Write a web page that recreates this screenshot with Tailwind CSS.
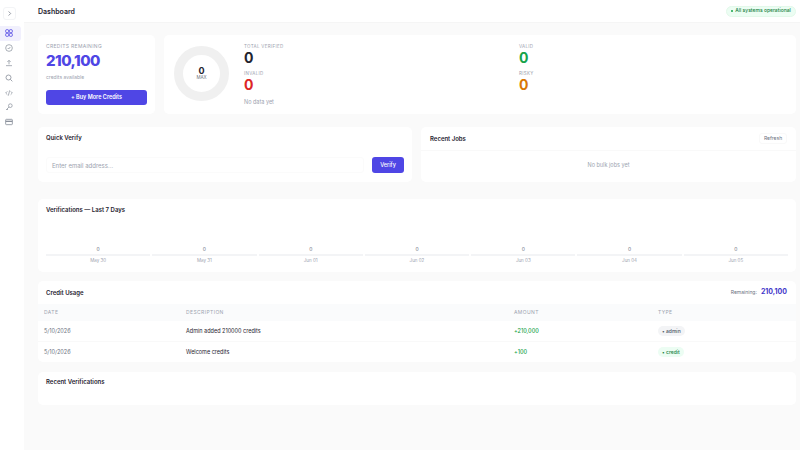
<!DOCTYPE html>
<html lang="en">
<head>
<meta charset="UTF-8">
<title>Dashboard</title>
<script src="https://cdn.jsdelivr.net/npm/@tailwindcss/browser@4"></script>
</head>
<body class="bg-[#fafafa] font-['Inter',sans-serif] text-[#1f2430]">
<div class="flex h-[450px] w-[800px] overflow-hidden">
  <!-- Sidebar -->
  <aside class="w-[24px] shrink-0 bg-white flex flex-col items-start">
    <button class="mt-[7px] ml-[3px] w-[13px] h-[13px] rounded-[3px] border border-[#f3f4f6] flex items-center justify-center text-[#6b7280]">
      <svg width="7" height="7" viewBox="0 0 24 24" fill="none" stroke="currentColor" stroke-width="2.5"><path d="M9 5l7 7-7 7"/></svg>
    </button>
    <nav class="mt-[6px] w-full flex flex-col text-[#8b919c]">
      <a class="h-[14.8px] w-[21px] rounded-r-[3px] bg-[#f1f0fd] text-[#4f46e5] flex items-center pl-[5px]">
        <svg width="8" height="8" viewBox="0 0 24 24" fill="none" stroke="currentColor" stroke-width="2.5"><rect x="2" y="2" width="9" height="9" rx="3"/><rect x="13" y="2" width="9" height="9" rx="3"/><rect x="2" y="13" width="9" height="9" rx="3"/><rect x="13" y="13" width="9" height="9" rx="3"/></svg>
      </a>
      <a class="h-[14.8px] flex items-center pl-[5px]">
        <svg width="8" height="8" viewBox="0 0 24 24" fill="none" stroke="currentColor" stroke-width="2.2"><circle cx="12" cy="12" r="10"/><path d="M8 12l3 3 5-6"/></svg>
      </a>
      <a class="h-[14.8px] flex items-center pl-[5px]">
        <svg width="8" height="8" viewBox="0 0 24 24" fill="none" stroke="currentColor" stroke-width="2.2"><path d="M3 20h18M12 16V4M7 9l5-5 5 5"/></svg>
      </a>
      <a class="h-[14.8px] flex items-center pl-[5px]">
        <svg width="8" height="8" viewBox="0 0 24 24" fill="none" stroke="currentColor" stroke-width="2.5"><circle cx="10.5" cy="10.5" r="7.5"/><path d="M16 16l6 6"/></svg>
      </a>
      <a class="h-[14.8px] flex items-center pl-[5px]">
        <svg width="8" height="8" viewBox="0 0 24 24" fill="none" stroke="currentColor" stroke-width="2.2"><path d="M7 7l-5 5 5 5M17 7l5 5-5 5M14 4l-4 16"/></svg>
      </a>
      <a class="h-[14.8px] flex items-center pl-[5px]">
        <svg width="8" height="8" viewBox="0 0 24 24" fill="none" stroke="currentColor" stroke-width="2.2"><circle cx="16" cy="8" r="5.5"/><path d="M12 12L3 21M6 18l3 3"/></svg>
      </a>
      <a class="h-[14.8px] flex items-center pl-[5px]">
        <svg width="8" height="8" viewBox="0 0 24 24" fill="none" stroke="currentColor" stroke-width="2.5"><rect x="2" y="4" width="20" height="16" rx="2"/><path d="M2 10h20" stroke-width="4"/></svg>
      </a>
    </nav>
  </aside>

  <div class="flex-1 min-w-0 flex flex-col">
    <!-- Header -->
    <header class="h-[23px] shrink-0 bg-white border-b border-[#f5f5f5] flex items-center justify-between pl-[14px] pr-[4px]">
      <h1 class="text-[7px] leading-none font-semibold">Dashboard</h1>
      <div class="h-[11px] w-[70px] justify-center rounded-full bg-[#ecfdf3] border border-[#e3f9ea] text-[#15803d] text-[5px] font-medium flex items-center gap-[2px]">
        <span class="w-[2px] h-[2px] rounded-full bg-[#16a34a]"></span>All systems operational
      </div>
    </header>

    <main class="pl-[14px] pr-[4px] pt-[12px] flex flex-col">
      <!-- Top stats -->
      <div class="flex gap-[9px] h-[79px]">
        <section class="w-[117px] bg-white rounded-[5px] px-[8px] pt-[8px]">
          <p class="text-[5px] leading-[7px] tracking-[0.3px] text-[#9ca3af] uppercase">Credits Remaining</p>
          <p class="text-[15px] leading-[20px] mt-[1px] font-extrabold tracking-[-0.5px] text-[#4f46e5]">210,100</p>
          <p class="text-[5px] leading-[7px] mt-[3px] text-[#9ca3af]">credits available</p>
          <button class="mt-[9px] w-full h-[15px] rounded-[3px] bg-[#4f46e5] text-white text-[5.5px] font-semibold">+ Buy More Credits</button>
        </section>
        <section class="flex-1 bg-white rounded-[5px] flex pl-[10px]">
          <div class="mt-[11px] w-[55px] h-[55px] rounded-full border-[9px] border-[#f0f0f0] flex flex-col items-center justify-center shrink-0">
            <span class="text-[9px] leading-[9px] font-bold">0</span>
            <span class="text-[4.5px] leading-[6px] mt-[0.5px] text-[#6b7280]">MAX</span>
          </div>
          <div class="ml-[15px] pt-[8.5px] grid grid-cols-[275px_1fr] flex-1 content-start">
            <div class="h-[27px]">
              <p class="text-[4.5px] leading-[6px] tracking-[0.3px] text-[#9ca3af] uppercase">Total Verified</p>
              <p class="text-[14px] leading-[16px] font-bold">0</p>
            </div>
            <div class="h-[27px]">
              <p class="text-[4.5px] leading-[6px] tracking-[0.3px] text-[#9ca3af] uppercase">Valid</p>
              <p class="text-[14px] leading-[16px] font-bold text-[#16a34a]">0</p>
            </div>
            <div class="h-[27px]">
              <p class="text-[4.5px] leading-[6px] tracking-[0.3px] text-[#9ca3af] uppercase">Invalid</p>
              <p class="text-[14px] leading-[16px] font-bold text-[#dc2626]">0</p>
            </div>
            <div class="h-[27px]">
              <p class="text-[4.5px] leading-[6px] tracking-[0.3px] text-[#9ca3af] uppercase">Risky</p>
              <p class="text-[14px] leading-[16px] font-bold text-[#d97706]">0</p>
            </div>
            <p class="text-[5.5px] leading-[8px] text-[#9ca3af]">No data yet</p>
          </div>
        </section>
      </div>

      <!-- Quick verify + recent jobs -->
      <div class="flex gap-[9px] h-[55px] mt-[13px]">
        <section class="w-[374px] bg-white rounded-[5px] px-[8px] pt-[7px]">
          <h2 class="text-[6px] leading-[8px] font-semibold">Quick Verify</h2>
          <div class="mt-[15px] flex gap-[8px]">
            <div class="flex-1 h-[16px] rounded-[3px] border border-[#fbfbfb] flex items-center px-[5px] pt-[1px] text-[6px] text-[#9ca3af]">Enter email address...</div>
            <button class="w-[32px] h-[16px] rounded-[3px] bg-[#4f46e5] text-white text-[5.5px] font-medium">Verify</button>
          </div>
        </section>
        <section class="flex-1 bg-white rounded-[5px]">
          <div class="h-[24px] border-b border-[#f9f9f9] flex items-center justify-between pl-[9px] pr-[9px]">
            <h2 class="text-[6px] font-semibold">Recent Jobs</h2>
            <button class="h-[11px] w-[28px] rounded-[3px] border border-[#f9f9f9] text-[5px] text-[#6b7280]">Refresh</button>
          </div>
          <p class="text-center text-[5.5px] leading-[8px] mt-[10px] text-[#9ca3af]">No bulk jobs yet</p>
        </section>
      </div>

      <!-- Chart -->
      <section class="h-[73px] mt-[17px] bg-white rounded-[5px] px-[8px] pt-[7px]">
        <h2 class="text-[6px] leading-[8px] font-semibold">Verifications — Last 7 Days</h2>
        <div class="mt-[32px] grid grid-cols-7 gap-[2px] text-center">
          <div><p class="text-[5px] leading-[7px] text-[#6b7280]">0</p><div class="mt-[1px] h-[2px] bg-[#f3f4f6]"></div><p class="mt-[1px] text-[4.5px] leading-[7px] text-[#9ca3af]">May 30</p></div>
          <div><p class="text-[5px] leading-[7px] text-[#6b7280]">0</p><div class="mt-[1px] h-[2px] bg-[#f3f4f6]"></div><p class="mt-[1px] text-[4.5px] leading-[7px] text-[#9ca3af]">May 31</p></div>
          <div><p class="text-[5px] leading-[7px] text-[#6b7280]">0</p><div class="mt-[1px] h-[2px] bg-[#f3f4f6]"></div><p class="mt-[1px] text-[4.5px] leading-[7px] text-[#9ca3af]">Jun 01</p></div>
          <div><p class="text-[5px] leading-[7px] text-[#6b7280]">0</p><div class="mt-[1px] h-[2px] bg-[#f3f4f6]"></div><p class="mt-[1px] text-[4.5px] leading-[7px] text-[#9ca3af]">Jun 02</p></div>
          <div><p class="text-[5px] leading-[7px] text-[#6b7280]">0</p><div class="mt-[1px] h-[2px] bg-[#f3f4f6]"></div><p class="mt-[1px] text-[4.5px] leading-[7px] text-[#9ca3af]">Jun 03</p></div>
          <div><p class="text-[5px] leading-[7px] text-[#6b7280]">0</p><div class="mt-[1px] h-[2px] bg-[#f3f4f6]"></div><p class="mt-[1px] text-[4.5px] leading-[7px] text-[#9ca3af]">Jun 04</p></div>
          <div><p class="text-[5px] leading-[7px] text-[#6b7280]">0</p><div class="mt-[1px] h-[2px] bg-[#f3f4f6]"></div><p class="mt-[1px] text-[4.5px] leading-[7px] text-[#9ca3af]">Jun 05</p></div>
        </div>
      </section>

      <!-- Credit usage -->
      <section class="h-[81px] mt-[9px] bg-white rounded-[5px] overflow-hidden">
        <div class="h-[23px] flex items-center justify-between pl-[8px] pr-[9px]">
          <h2 class="text-[6px] font-semibold">Credit Usage</h2>
          <div class="flex items-center gap-[4px]">
            <span class="text-[5px] text-[#6b7280]">Remaining:</span>
            <span class="text-[7px] font-bold text-[#4338ca]">210,100</span>
          </div>
        </div>
        <div class="h-[17px] bg-[#fafbfc] grid grid-cols-[142px_328px_144px_1fr] items-center pl-[6px] text-[5px] tracking-[0.4px] text-[#9ca3af] uppercase">
          <span>Date</span><span>Description</span><span>Amount</span><span>Type</span>
        </div>
        <div class="h-[20.5px] border-b border-[#f9f9f9] grid grid-cols-[142px_328px_144px_1fr] items-center pl-[6px] text-[5.5px]">
          <span class="text-[#6b7280]">5/10/2026</span>
          <span>Admin added 210000 credits</span>
          <span class="font-medium text-[#16a34a]">+210,000</span>
          <span><span class="inline-block h-[10px] leading-[10px] px-[4px] rounded-full bg-[#f3f4f6] text-[#4b5563] text-[5px] font-medium">• admin</span></span>
        </div>
        <div class="h-[20.5px] grid grid-cols-[142px_328px_144px_1fr] items-center pl-[6px] text-[5.5px]">
          <span class="text-[#6b7280]">5/10/2026</span>
          <span>Welcome credits</span>
          <span class="font-medium text-[#16a34a]">+100</span>
          <span><span class="inline-block h-[10px] leading-[10px] px-[4px] rounded-full bg-[#ecfdf3] text-[#15803d] text-[5px] font-medium">• credit</span></span>
        </div>
      </section>

      <!-- Recent verifications -->
      <section class="h-[33px] mt-[10px] bg-white rounded-[5px] px-[8px] pt-[6px]">
        <h2 class="text-[6px] leading-[8px] font-semibold">Recent Verifications</h2>
      </section>
    </main>
  </div>
</div>
</body>
</html>
